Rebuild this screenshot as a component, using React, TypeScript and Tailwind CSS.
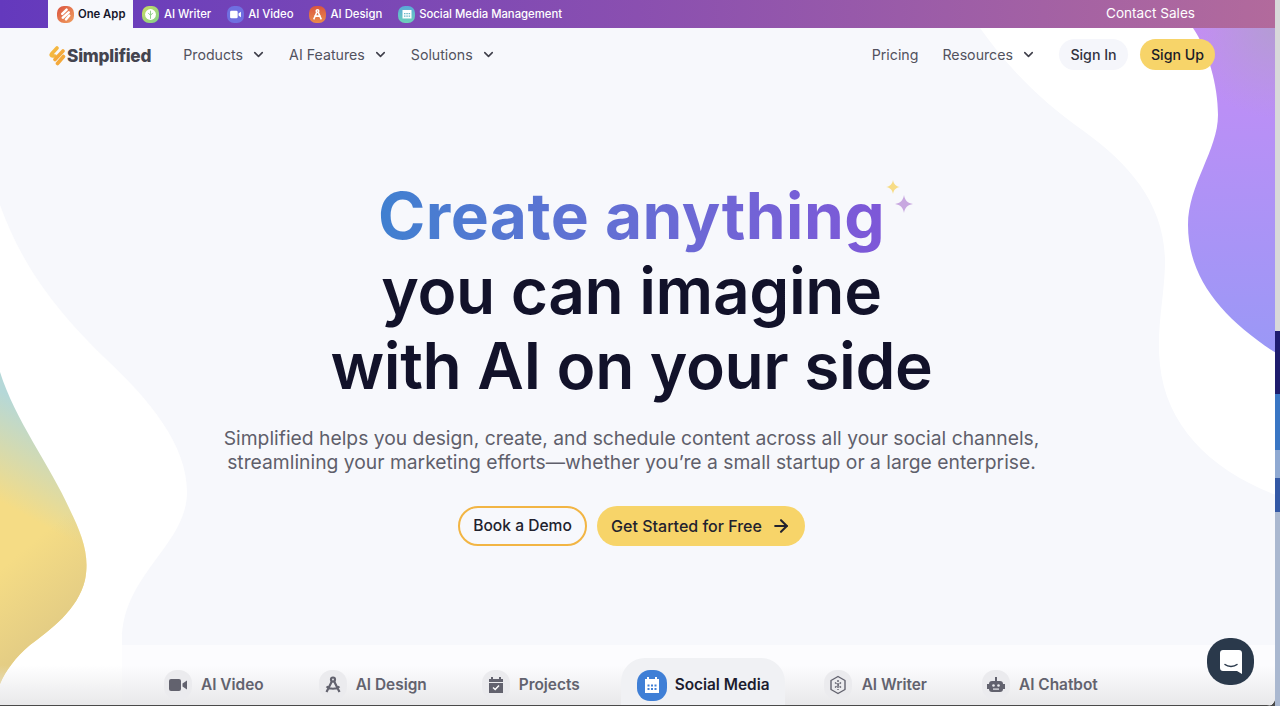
import { ArrowRight, ChevronDown } from "lucide-react";

const FONT = "font-['Inter','Noto_Sans',sans-serif]";

function Blobs() {
  return (
    <svg className="absolute left-0 top-0 w-[1276px] h-[706px]" viewBox="0 0 1276 706" fill="none">
      <defs>
        <linearGradient id="purple" x1="0" y1="28" x2="0" y2="353" gradientUnits="userSpaceOnUse">
          <stop offset="0" stopColor="#c58cf6" />
          <stop offset="1" stopColor="#9a98f6" />
        </linearGradient>
        <radialGradient id="purpleTop" cx="1276" cy="28" r="90" gradientUnits="userSpaceOnUse">
          <stop offset="0" stopColor="#b49cd4" />
          <stop offset="1" stopColor="#b49cd4" stopOpacity="0" />
        </radialGradient>
        <linearGradient id="yellow" x1="62" y1="425" x2="15" y2="510" gradientUnits="userSpaceOnUse">
          <stop offset="0" stopColor="#b5d8d8" />
          <stop offset="1" stopColor="#f5dc85" />
        </linearGradient>
        <linearGradient id="tan" x1="35" y1="540" x2="85" y2="600" gradientUnits="userSpaceOnUse">
          <stop offset="0" stopColor="#e4cd84" stopOpacity="0" />
          <stop offset="1" stopColor="#e4cd84" />
        </linearGradient>
      </defs>
      <path
        d="M980 28C1010 70 1040 100 1085 132C1130 165 1166 205 1165 265C1164 300 1156 330 1160 365C1166 425 1210 470 1276 495V28Z"
        fill="#fff"
      />
      <path d="M1193 28C1208 50 1218 85 1218 115C1218 150 1188 185 1188 225C1188 280 1225 320 1276 353V28Z" fill="url(#purple)" />
      <path d="M1193 28C1208 50 1218 85 1218 115V120H1276V28Z" fill="url(#purpleTop)" />
      <path
        d="M0 205C20 260 50 305 105 358C150 400 187 445 187 492C187 545 122 575 122 640C122 665 127 685 130 706H0Z"
        fill="#fff"
      />
      <path
        d="M0 372C15 420 50 465 70 510C82 535 90 555 85 580C78 610 50 630 30 645C15 658 6 670 0 684Z"
        fill="url(#yellow)"
      />
      <path d="M0 372C15 420 50 465 70 510C82 535 90 555 85 580C78 610 50 630 30 645C15 658 6 670 0 684Z" fill="url(#tan)" />
    </svg>
  );
}

function Spark({ className, fill }: { className: string; fill: string }) {
  return (
    <svg className={className} viewBox="0 0 20 20">
      <path d="M10 0C11 6 14 9 20 10C14 11 11 14 10 20C9 14 6 11 0 10C6 9 9 6 10 0Z" fill={fill} />
    </svg>
  );
}

function Logo({ className }: { className: string }) {
  return (
    <svg className={className} viewBox="0 0 18 20" fill="none">
      <path d="M9 2L3.500 8C2.800 8.900 3.200 10 4.500 10H7" stroke="#f4b740" strokeWidth="3.600" strokeLinecap="round" strokeLinejoin="round" />
      <path d="M15 5L7 13.500M15.500 10.500L9.500 17.500" stroke="#f4a93a" strokeWidth="3.600" strokeLinecap="round" />
    </svg>
  );
}

function TopIcon({ bg, children }: { bg: string; children: React.ReactNode }) {
  return (
    <span className={`w-[17px] h-[17px] rounded-[7px] flex items-center justify-center shrink-0 ${bg}`}>{children}</span>
  );
}

function TopBar() {
  return (
    <div className="relative h-[28px] flex items-center pl-[48px] pr-[80px] bg-gradient-to-r from-[#6439bd] via-[#8a4fb0] to-[#b26a9c] text-white text-[11.3px] font-medium">
      <div className="h-full w-[85px] bg-[#f7f8fc] flex items-center pl-[9px] gap-[4px] text-[#16162a] font-semibold">
        <span className="w-[17px] h-[17px] rounded-[7px] bg-gradient-to-br from-[#d9503f] to-[#f0a060] flex items-center justify-center shrink-0">
          <svg className="w-[13px] h-[13px]" viewBox="0 0 12 12" fill="none" stroke="#fff" strokeWidth="2.200" strokeLinecap="round">
            <path d="M7 1.500L3 5.500M9 4L3.500 9M9.500 7L6.500 10.500" />
          </svg>
        </span>
        One App
      </div>
      <div className="flex items-center ml-[9px] gap-[5px]">
        <TopIcon bg="bg-gradient-to-br from-[#c9dc5c] to-[#7fcf8a]">
          <svg className="w-[13px] h-[13px]" viewBox="0 0 12 12" fill="#fff" stroke="#8fd08a" strokeWidth="0.900">
            <circle cx="6" cy="6" r="5" stroke="none" />
            <path d="M6 2.500V10M3.800 4.500L6 6.800L8.200 4.500" fill="none" />
          </svg>
        </TopIcon>
        <span>AI Writer</span>
      </div>
      <div className="flex items-center ml-[16px] gap-[4px]">
        <TopIcon bg="bg-[#6f6fe0]">
          <svg className="w-[13px] h-[13px]" viewBox="0 0 12 12" fill="#fff">
            <rect x="1" y="2.500" width="7" height="7" rx="1.200" />
            <path d="M8.800 5L11 3.500V8.500L8.800 7Z" />
          </svg>
        </TopIcon>
        <span>AI Video</span>
      </div>
      <div className="flex items-center ml-[15px] gap-[5px]">
        <TopIcon bg="bg-gradient-to-b from-[#d9553f] to-[#ea8a4a]">
          <svg className="w-[13px] h-[13px]" viewBox="0 0 12 12" fill="none" stroke="#fff" strokeWidth="1.400">
            <circle cx="6" cy="2.800" r="1.200" />
            <path d="M5.300 4L2.500 10.500M6.700 4L9.500 10.500M3 7.500H9" />
          </svg>
        </TopIcon>
        <span>AI Design</span>
      </div>
      <div className="flex items-center ml-[16px] gap-[4px]">
        <TopIcon bg="bg-gradient-to-b from-[#5aa8d8] to-[#6fd0b8]">
          <svg className="w-[12px] h-[12px]" viewBox="0 0 12 12" fill="#fff">
            <path d="M1.500 2H10.500V10.500H1.500Z" />
            <path d="M3 5h1.500v1.200H3zM5.300 5h1.500v1.200H5.300zM7.600 5h1.500v1.200H7.600zM3 7.500h1.500v1.200H3zM5.300 7.500h1.500v1.200H5.300zM7.600 7.500h1.500v1.200H7.600z" fill="#6bb8c8" />
          </svg>
        </TopIcon>
        <span>Social Media Management</span>
      </div>
      <span className="ml-auto mb-[2px] text-[13.6px] font-normal">Contact Sales</span>
    </div>
  );
}

function NavLink({ label, menu, className }: { label: string; menu?: boolean; className: string }) {
  return (
    <div className={`flex items-center text-[14.2px] text-[#52525e] ${className}`}>
      <span>{label}</span>
      {menu && <ChevronDown className="w-[15px] h-[15px] ml-[8px] text-[#3f3f4a]" strokeWidth={2.5} />}
    </div>
  );
}

function Nav() {
  return (
    <div className="relative flex items-center h-[53px] pl-[48px] pr-[60px]">
      <div className="flex items-center mt-[3px]">
        <Logo className="w-[18px] h-[20px]" />
        <span className="text-[17.2px] font-extrabold text-[#44444f] ml-[1px] tracking-[-0.2px]">Simplified</span>
      </div>
      <NavLink label="Products" menu className="ml-[32px]" />
      <NavLink label="AI Features" menu className="ml-[23px]" />
      <NavLink label="Solutions" menu className="ml-[23px]" />
      <NavLink label="Pricing" className="ml-auto" />
      <NavLink label="Resources" menu className="ml-[24px]" />
      <button className="ml-[23px] w-[69px] h-[31px] rounded-full bg-[#f5f6fb] text-[14.2px] font-medium text-[#33333f]">Sign In</button>
      <button className="ml-[12px] w-[75px] h-[31px] rounded-full bg-[#f7d469] text-[14.2px] font-medium text-[#1c1c28]">Sign Up</button>
    </div>
  );
}

function Hero() {
  return (
    <div className="relative flex flex-col items-center pt-[97px] pr-[12px]">
      <h1 className="text-[64px] leading-[75px] font-semibold text-[#12122a] text-center tracking-[-0.35px]">
        <span className="relative inline-block font-bold tracking-[0.45px]">
          <span className="bg-gradient-to-r from-[#3f80d0] to-[#7e57d8] bg-clip-text text-transparent">Create anything</span>
          <Spark className="absolute left-[508px] top-[2px] w-[14px] h-[14px]" fill="#f7dc85" />
          <Spark className="absolute left-[517px] top-[17px] w-[18px] h-[18px]" fill="#c8a8e0" />
        </span>
        <br />
        you can imagine
        <br />
        with AI on your side
      </h1>
      <p className="mt-[23px] text-[19.3px] leading-[24px] text-[#5f5f6b] text-center">
        Simplified helps you design, create, and schedule content across all your social channels,
        <br />
        streamlining your marketing efforts—whether you’re a small startup or a large enterprise.
      </p>
      <div className="flex gap-[10px] mt-[32px]">
        <button className="w-[129px] h-[40px] rounded-full border-2 border-[#f2b544] text-[15.6px] font-medium text-[#22222e]">Book a Demo</button>
        <button className="w-[208px] h-[40px] rounded-full bg-[#f7d469] text-[16px] font-medium text-[#22222e] flex items-center justify-center gap-[9px]">
          Get Started for Free
          <ArrowRight className="w-[20px] h-[20px]" strokeWidth={2.5} />
        </button>
      </div>
    </div>
  );
}

function TabIcon({ children, active }: { children: React.ReactNode; active?: boolean }) {
  return (
    <span
      className={`flex items-center justify-center rounded-[13px] shrink-0 ${
        active ? "w-[30px] h-[31px] bg-[#3f7fd6]" : "w-[28px] h-[30px] bg-[#ebebee]"
      }`}
    >
      {children}
    </span>
  );
}

function Tabs() {
  const gray = "#62626e";
  return (
    <div className="absolute left-[122px] right-0 top-[645px] h-[61px] text-[15.4px] font-semibold text-[#62626e]">
      <div className="relative flex items-center h-full pt-[19px] pl-[42px]">
        <div className="flex items-center gap-[9px]">
          <TabIcon>
            <svg className="w-[20px] h-[20px]" viewBox="0 0 20 20" fill={gray}>
              <rect x="1" y="4" width="12" height="12" rx="2" />
              <path d="M14.500 8.500L19 5.500V14.500L14.500 11.500Z" />
            </svg>
          </TabIcon>
          <span>AI Video</span>
        </div>
        <div className="flex items-center gap-[9px] ml-[55px]">
          <TabIcon>
            <svg className="w-[20px] h-[20px]" viewBox="0 0 20 20" fill="none" stroke={gray} strokeWidth="2.200">
              <circle cx="10" cy="4.500" r="2" />
              <path d="M8.800 6.500L3.500 17M11.200 6.500L16.500 17M3.500 11.500C7 14.500 13 14.500 16.500 11.500" />
            </svg>
          </TabIcon>
          <span>AI Design</span>
        </div>
        <div className="flex items-center gap-[9px] ml-[55px]">
          <TabIcon>
            <svg className="w-[20px] h-[20px]" viewBox="0 0 20 20" fill={gray}>
              <path d="M3 4H17V18H3Z" />
              <path d="M6 2V5M14 2V5" stroke={gray} strokeWidth="2" />
              <path d="M3 7.500H17" stroke="#ebebee" strokeWidth="1" />
              <path d="M7 12.500L9.200 14.500L13 10.500" fill="none" stroke="#fff" strokeWidth="1.400" />
            </svg>
          </TabIcon>
          <span>Projects</span>
        </div>
        <div className="flex items-center gap-[8px] ml-[41px] w-[164px] h-[48px] self-end pt-[6px] pl-[16px] rounded-t-[24px] bg-[#f0f1f4] text-[#1c1c2e]">
          <TabIcon active>
            <svg className="w-[20px] h-[20px]" viewBox="0 0 20 20" fill="#fff">
              <path d="M3 4H17V18H3Z" />
              <path d="M6 2V5M14 2V5" stroke="#fff" strokeWidth="2" />
              <path d="M5.500 9.500h2v2h-2zM9 9.500h2v2H9zM12.500 9.500h2v2h-2zM5.500 13h2v2h-2zM9 13h2v2H9zM12.500 13h2v2h-2z" fill="#3f7fd6" />
            </svg>
          </TabIcon>
          <span>Social Media</span>
        </div>
        <div className="flex items-center gap-[10px] ml-[39px]">
          <TabIcon>
            <svg className="w-[20px] h-[20px]" viewBox="0 0 20 20" fill="none" stroke={gray} strokeWidth="1.400">
              <path d="M10 1.500L17 5.500V14.500L10 18.500L3 14.500V5.500Z" strokeLinejoin="round" />
              <path d="M10 5V15M7 7.500L10 10L13 7.500M7 12.500L10 10L13 12.500" strokeDasharray="2 1" />
            </svg>
          </TabIcon>
          <span>AI Writer</span>
        </div>
        <div className="flex items-center gap-[9px] ml-[55px]">
          <TabIcon>
            <svg className="w-[20px] h-[20px]" viewBox="0 0 20 20" fill={gray}>
              <rect x="3" y="6" width="14" height="11" rx="3" />
              <rect x="9" y="2" width="2" height="4" />
              <rect x="1" y="9" width="2" height="5" />
              <rect x="17" y="9" width="2" height="5" />
              <circle cx="7.500" cy="10.500" r="1.300" fill="#ebebee" />
              <circle cx="12.500" cy="10.500" r="1.300" fill="#ebebee" />
              <rect x="7" y="13.500" width="6" height="1.200" fill="#ebebee" />
            </svg>
          </TabIcon>
          <span>AI Chatbot</span>
        </div>
      </div>
    </div>
  );
}

function ChatButton() {
  return (
    <div className="absolute left-[1207px] top-[638px] w-[47px] h-[47px] rounded-[22px] bg-[#2a394b] flex items-center justify-center">
      <svg className="w-[22px] h-[24px]" viewBox="0 0 22 24">
        <path d="M3 0H19C20.700 0 22 1.300 22 3V24L17 21H3C1.300 21 0 19.700 0 18V3C0 1.300 1.300 0 3 0Z" fill="#fff" />
        <path d="M5 14.500C8 17 14 17 17 14.500" fill="none" stroke="#2a394b" strokeWidth="1.500" strokeLinecap="round" />
      </svg>
    </div>
  );
}

function SideStrip() {
  return (
    <div className="w-[5px] h-full flex flex-col bg-[#d8d8da]">
      <div className="h-[331px]" />
      <div className="h-[63px] bg-[#1f1d6e]" />
      <div className="h-[56px] bg-[#3a76c4]" />
      <div className="h-[28px] bg-[#8fa9d2]" />
      <div className="h-[34px] bg-[#3358a5]" />
      <div className="flex-1 bg-[#aab8d0]" />
    </div>
  );
}

export default function App() {
  return (
    <div className={`w-[1280px] h-[706px] flex overflow-hidden bg-[#4a4a4a] ${FONT}`}>
      <div className="relative w-[1275px] h-full overflow-hidden rounded-br-[8px] bg-[#f7f8fc]">
        <Blobs />
        <div className="absolute left-[122px] right-0 top-[645px] h-[61px] bg-[#fcfcfe]" />
        <div className="absolute left-0 right-0 top-[665px] h-[41px] bg-gradient-to-b from-transparent to-[#e8e8ea]" />
        <Tabs />
        <TopBar />
        <Nav />
        <Hero />
        <ChatButton />
        <div className="absolute left-0 right-0 bottom-0 h-[1px] bg-[#4a4a4a]" />
      </div>
      <SideStrip />
    </div>
  );
}
